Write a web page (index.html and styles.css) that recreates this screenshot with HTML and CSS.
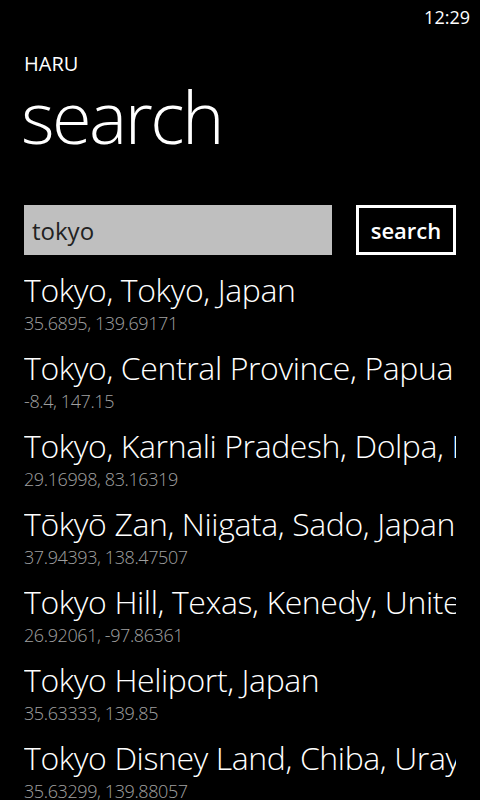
FILE: index.html
```html
<!DOCTYPE html>
<html>
<head>
<meta charset="utf-8">
<link rel="stylesheet" href="styles.css">
</head>
<body>
<div class="phone">
  <div class="status"><span class="clock">12:29</span></div>
  <div class="app-title">HARU</div>
  <div class="page-title">search</div>
  <div class="search-row">
    <div class="textbox">tokyo</div>
    <div class="btn">search</div>
  </div>
  <div class="results">
    <div class="item"><div class="name">Tokyo, Tokyo, Japan</div><div class="coords">35.6895, 139.69171</div></div>
    <div class="item"><div class="name">Tokyo, Central Province, Papua New Guinea</div><div class="coords">-8.4, 147.15</div></div>
    <div class="item"><div class="name">Tokyo, Karnali Pradesh, Dolpa, Nepal</div><div class="coords">29.16998, 83.16319</div></div>
    <div class="item"><div class="name">Tōkyō Zan, Niigata, Sado, Japan</div><div class="coords">37.94393, 138.47507</div></div>
    <div class="item"><div class="name">Tokyo Hill, Texas, Kenedy, United States</div><div class="coords">26.92061, -97.86361</div></div>
    <div class="item"><div class="name">Tokyo Heliport, Japan</div><div class="coords">35.63333, 139.85</div></div>
    <div class="item"><div class="name">Tokyo Disney Land, Chiba, Urayasu, Japan</div><div class="coords">35.63299, 139.88057</div></div>
  </div>
</div>
</body>
</html>
```

FILE: styles.css
```css
html, body {
  margin: 0;
  padding: 0;
  background: #000;
}
.phone {
  width: 480px;
  height: 800px;
  overflow: hidden;
  background: #000;
  color: #fff;
  font-family: "Open Sans", "Noto Sans", sans-serif;
}
.status {
  height: 32px;
  display: flex;
  justify-content: flex-end;
  align-items: center;
  padding-right: 10px;
}
.clock {
  font-size: 18px;
  line-height: 1;
  padding-top: 1px;
}
.app-title {
  margin-top: 20px;
  padding-left: 24px;
  font-size: 20px;
  line-height: 24px;
}
.page-title {
  padding-left: 21px;
  font-size: 72px;
  font-weight: 300;
  line-height: 72px;
  margin-top: 4px;
  letter-spacing: -2.5px;
}
.search-row {
  display: flex;
  align-items: stretch;
  padding: 0 24px;
  margin-top: 53px;
  gap: 24px;
  height: 50px;
}
.textbox {
  width: 308px;
  background: #bfbfbf;
  color: #222;
  font-size: 24px;
  display: flex;
  align-items: center;
  padding-left: 8px;
  box-sizing: border-box;
}
.btn {
  width: 100px;
  box-sizing: border-box;
  border: 3px solid #fff;
  display: flex;
  align-items: center;
  justify-content: center;
  font-size: 22px;
  font-weight: 600;
}
.results {
  margin: 15px 24px 0 24px;
  width: 432px;
  overflow: hidden;
}
.item {
  height: 78px;
  white-space: nowrap;
}
.name {
  font-size: 32px;
  font-weight: 350;
  line-height: 40px;
  letter-spacing: -0.4px;
}
.coords {
  margin-top: 2px;
  font-size: 18px;
  font-weight: 300;
  line-height: 22px;
  letter-spacing: -0.4px;
  color: #a0a0a0;
}
```
